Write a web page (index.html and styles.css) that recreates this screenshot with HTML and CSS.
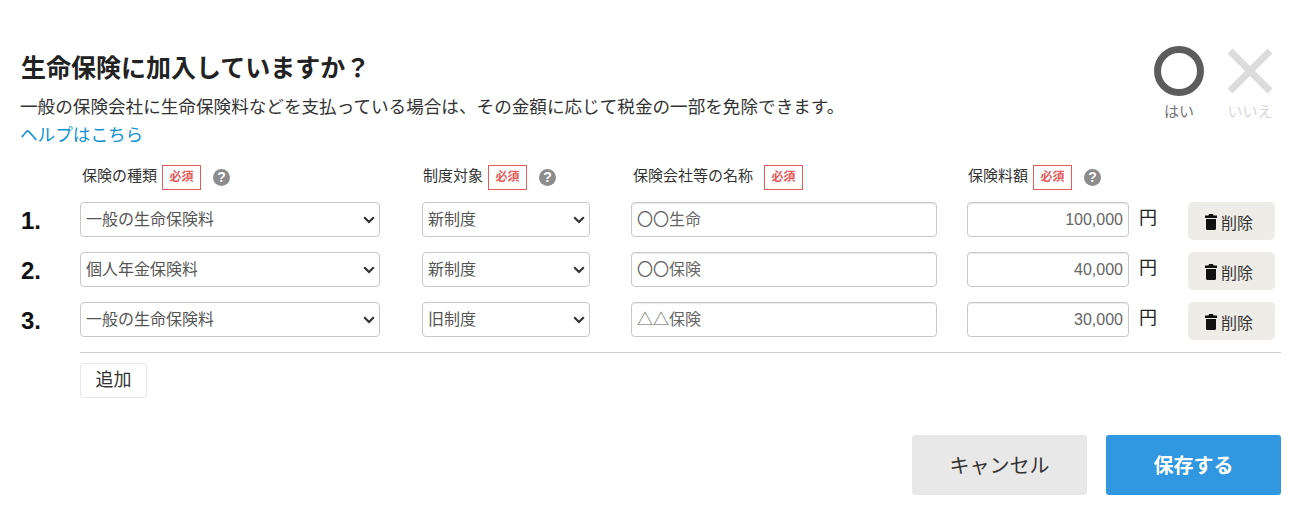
FILE: index.html
```html
<!DOCTYPE html>
<html lang="ja">
<head>
  <meta charset="UTF-8">
  <title>生命保険</title>
  <link rel="stylesheet" href="styles.css">
</head>
<body>
  <div class="dialog">
    <div class="top">
      <div class="intro">
        <h1>生命保険に加入していますか？</h1>
        <p>一般の保険会社に生命保険料などを支払っている場合は、その金額に応じて税金の一部を免除できます。</p>
        <a class="help" href="#">ヘルプはこちら</a>
      </div>
      <div class="choice">
        <div class="choice-item">
          <svg width="50" height="50" viewBox="0 0 50 50"><circle cx="25" cy="25" r="21.500" fill="none" stroke="#5c5c5c" stroke-width="7"/></svg>
          <span>はい</span>
        </div>
        <div class="choice-item off">
          <svg width="46" height="46" viewBox="0 0 46 46"><path d="M3 3 L43 43 M43 3 L3 43" fill="none" stroke="#dcdcdc" stroke-width="7"/></svg>
          <span>いいえ</span>
        </div>
      </div>
    </div>

    <div class="grid head">
      <div></div>
      <div class="th pad-2"><span class="lbl">保険の種類</span><em class="req">必須</em><i class="q">?</i></div>
      <div class="th pad-1"><span class="lbl">制度対象</span><em class="req">必須</em><i class="q">?</i></div>
      <div class="th pad-2"><span class="lbl">保険会社等の名称</span><em class="req req-wide">必須</em></div>
      <div class="th pad-1"><span class="lbl">保険料額</span><em class="req">必須</em><i class="q">?</i></div>
      <div></div>
    </div>

    <div class="grid row">
      <div class="num">1.</div>
      <div class="sel-wrap sel-type">
        <select class="sel"><option>一般の生命保険料</option></select>
        <svg class="chev" width="12" height="8" viewBox="0 0 12 8"><path d="M1.200 1.200 6 6 10.800 1.200" fill="none" stroke="#333" stroke-width="2.200"/></svg>
      </div>
      <div class="sel-wrap sel-sys">
        <select class="sel"><option>新制度</option></select>
        <svg class="chev" width="12" height="8" viewBox="0 0 12 8"><path d="M1.200 1.200 6 6 10.800 1.200" fill="none" stroke="#333" stroke-width="2.200"/></svg>
      </div>
      <div><input class="inp inp-name" value="〇〇生命"></div>
      <div class="amount"><input class="inp inp-yen" value="100,000"><span class="yen">円</span></div>
      <div><button class="del"><svg width="12" height="16" viewBox="0 0 12 16"><path d="M4 0h4l.5 1.500H12V4H0V1.500h3.500zM1 5h10v9.500q0 1.500-1.500 1.500h-7Q1 16 1 14.500z" fill="#111"/></svg>削除</button></div>
    </div>
    <div class="grid row">
      <div class="num">2.</div>
      <div class="sel-wrap sel-type">
        <select class="sel"><option>個人年金保険料</option></select>
        <svg class="chev" width="12" height="8" viewBox="0 0 12 8"><path d="M1.200 1.200 6 6 10.800 1.200" fill="none" stroke="#333" stroke-width="2.200"/></svg>
      </div>
      <div class="sel-wrap sel-sys">
        <select class="sel"><option>新制度</option></select>
        <svg class="chev" width="12" height="8" viewBox="0 0 12 8"><path d="M1.200 1.200 6 6 10.800 1.200" fill="none" stroke="#333" stroke-width="2.200"/></svg>
      </div>
      <div><input class="inp inp-name" value="〇〇保険"></div>
      <div class="amount"><input class="inp inp-yen" value="40,000"><span class="yen">円</span></div>
      <div><button class="del"><svg width="12" height="16" viewBox="0 0 12 16"><path d="M4 0h4l.5 1.500H12V4H0V1.500h3.500zM1 5h10v9.500q0 1.500-1.500 1.500h-7Q1 16 1 14.500z" fill="#111"/></svg>削除</button></div>
    </div>
    <div class="grid row">
      <div class="num">3.</div>
      <div class="sel-wrap sel-type">
        <select class="sel"><option>一般の生命保険料</option></select>
        <svg class="chev" width="12" height="8" viewBox="0 0 12 8"><path d="M1.200 1.200 6 6 10.800 1.200" fill="none" stroke="#333" stroke-width="2.200"/></svg>
      </div>
      <div class="sel-wrap sel-sys">
        <select class="sel"><option>旧制度</option></select>
        <svg class="chev" width="12" height="8" viewBox="0 0 12 8"><path d="M1.200 1.200 6 6 10.800 1.200" fill="none" stroke="#333" stroke-width="2.200"/></svg>
      </div>
      <div><input class="inp inp-name" value="△△保険"></div>
      <div class="amount"><input class="inp inp-yen" value="30,000"><span class="yen">円</span></div>
      <div><button class="del"><svg width="12" height="16" viewBox="0 0 12 16"><path d="M4 0h4l.5 1.500H12V4H0V1.500h3.500zM1 5h10v9.500q0 1.500-1.500 1.500h-7Q1 16 1 14.500z" fill="#111"/></svg>削除</button></div>
    </div>

    <div class="add-area">
      <button class="add">追加</button>
    </div>

    <div class="actions">
      <button class="btn cancel">キャンセル</button>
      <button class="btn save">保存する</button>
    </div>
  </div>
</body>
</html>
```

FILE: styles.css
```css
* {
  box-sizing: border-box;
}

body {
  margin: 0;
  background: #fff;
  color: #333;
  font-family: "Liberation Sans", "Noto Sans CJK JP", sans-serif;
}

.dialog {
  width: 1297px;
  height: 512px;
  padding: 46px 16px 0 20px;
  overflow: hidden;
}

.top {
  display: flex;
  justify-content: space-between;
  height: 119px;
}

h1 {
  margin: 7px 0 0 1px;
  font-size: 25px;
  line-height: 30px;
  font-weight: bold;
  color: #222;
}

.intro p {
  margin: 12px 0 0;
  font-size: 17.600px;
  line-height: 24px;
}

.help {
  display: block;
  margin-top: 4px;
  font-size: 17.600px;
  line-height: 24px;
  color: #1292d3;
  text-decoration: none;
}

.choice {
  display: flex;
  gap: 23px;
  padding-right: 8px;
}

.choice-item {
  display: flex;
  flex-direction: column;
  align-items: center;
  width: 50px;
  font-size: 15px;
  line-height: 20px;
  color: #777;
}

.choice-item svg {
  margin-bottom: 6px;
}

.choice-item.off {
  width: 46px;
  color: #d8d8d8;
}

.choice-item.off svg {
  margin-top: 2px;
  margin-bottom: 8px;
}

.grid {
  display: grid;
  grid-template-columns: 60px 342px 209px 336px 221px 87px;
}

.head {
  height: 37px;
}

.th {
  display: flex;
  align-items: center;
  height: 25px;
  font-size: 15px;
  color: #333;
}

.lbl {
  margin-top: -6px;
}

.pad-1 {
  padding-left: 1px;
}

.pad-2 {
  padding-left: 2px;
}

.req {
  display: inline-block;
  width: 39px;
  height: 25px;
  margin-left: 5px;
  border: 1px solid #e55a5a;
  color: #e55a5a;
  font-size: 12px;
  font-style: normal;
  font-weight: bold;
  line-height: 23px;
  text-align: center;
}

.req-wide {
  margin-left: 11px;
}

.q {
  display: inline-block;
  width: 17px;
  height: 17px;
  margin-left: 12px;
  border-radius: 50%;
  background: #8c8c8c;
  color: #fff;
  font-size: 14px;
  font-style: normal;
  font-weight: bold;
  line-height: 17px;
  text-align: center;
}

.row {
  height: 50px;
}

.num {
  padding: 1px 0 0 1px;
  font-size: 24px;
  font-weight: bold;
  line-height: 35px;
  color: #111;
}

.sel,
.inp {
  height: 35px;
  border: 1px solid #c8c8c8;
  border-radius: 4px;
  background-color: #fff;
  color: #555;
  font-family: inherit;
  font-size: 16px;
}

.sel-wrap {
  position: relative;
}

.sel {
  appearance: none;
  -webkit-appearance: none;
  width: 100%;
  padding: 0 0 0 5px;
}

.sel-type {
  width: 300px;
}

.sel-sys {
  width: 168px;
}

.chev {
  position: absolute;
  top: 14px;
  right: 5px;
  pointer-events: none;
}

.inp {
  padding: 0 5px 3px;
  box-shadow: inset 0 1px 1px rgba(0, 0, 0, 0.08);
}

.inp-name {
  width: 306px;
  color: #666;
}

.inp-yen {
  width: 162px;
  padding-bottom: 0;
  color: #666;
  text-align: right;
}

.amount {
  display: flex;
}

.yen {
  margin-left: 10px;
  font-size: 18px;
  line-height: 32px;
  color: #222;
}

.del {
  display: flex;
  align-items: center;
  justify-content: center;
  gap: 4px;
  width: 87px;
  height: 38px;
  padding: 1px 5px 0 0;
  border: 0;
  border-radius: 5px;
  background: #edece7;
  color: #333;
  font-family: inherit;
  font-size: 16px;
}

.add-area {
  margin: 0 0 0 60px;
  padding-top: 10px;
  border-top: 1px solid #ccc;
}

.add {
  width: 67px;
  height: 35px;
  padding: 0 0 5px;
  border: 1px solid #e8e8e8;
  border-radius: 3px;
  background: #fff;
  color: #333;
  font-family: inherit;
  font-size: 18px;
}

.actions {
  display: flex;
  justify-content: flex-end;
  gap: 19px;
  margin-top: 37px;
}

.btn {
  width: 175px;
  height: 60px;
  padding: 0 0 2px;
  border: 0;
  border-radius: 3px;
  font-family: inherit;
  font-size: 20px;
}

.cancel {
  background: #e8e8e8;
  color: #333;
}

.save {
  background: #3097e0;
  color: #fff;
  font-weight: bold;
}
```
